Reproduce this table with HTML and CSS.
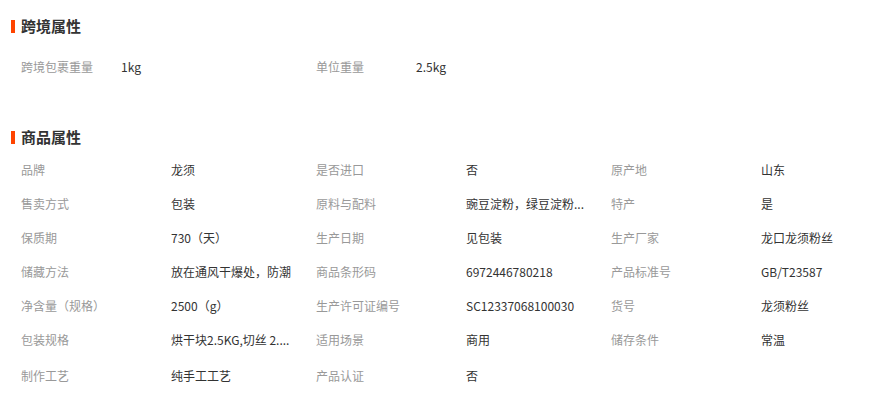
FILE: index.html
```html
<!DOCTYPE html>
<html lang="zh-CN">
<head>
  <meta charset="UTF-8" />
  <title>商品属性</title>
  <link rel="stylesheet" href="styles.css">
</head>
<body>

<div class="attr-panel">
  <!-- 跨境属性 -->
  <div class="section section-cross">
    <h3 class="section-title">跨境属性</h3>
    <div class="attr-grid cross-grid">
      <div class="attr-item">
        <span class="attr-name">跨境包裹重量</span>
        <span class="attr-value">1kg</span>
      </div>
      <div class="attr-item">
        <span class="attr-name">单位重量</span>
        <span class="attr-value">2.5kg</span>
      </div>
    </div>
  </div>

  <!-- 商品属性 -->
  <div class="section section-goods">
    <h3 class="section-title">商品属性</h3>
    <div class="attr-grid goods-grid">
      <div class="attr-item"><span class="attr-name">品牌</span><span class="attr-value">龙须</span></div>
      <div class="attr-item"><span class="attr-name">是否进口</span><span class="attr-value">否</span></div>
      <div class="attr-item"><span class="attr-name">原产地</span><span class="attr-value">山东</span></div>

      <div class="attr-item"><span class="attr-name">售卖方式</span><span class="attr-value">包装</span></div>
      <div class="attr-item"><span class="attr-name">原料与配料</span><span class="attr-value">豌豆淀粉，绿豆淀粉...</span></div>
      <div class="attr-item"><span class="attr-name">特产</span><span class="attr-value">是</span></div>

      <div class="attr-item"><span class="attr-name">保质期</span><span class="attr-value">730（天）</span></div>
      <div class="attr-item"><span class="attr-name">生产日期</span><span class="attr-value">见包装</span></div>
      <div class="attr-item"><span class="attr-name">生产厂家</span><span class="attr-value">龙口龙须粉丝</span></div>

      <div class="attr-item"><span class="attr-name">储藏方法</span><span class="attr-value">放在通风干爆处，防潮</span></div>
      <div class="attr-item"><span class="attr-name">商品条形码</span><span class="attr-value">6972446780218</span></div>
      <div class="attr-item"><span class="attr-name">产品标准号</span><span class="attr-value">GB/T23587</span></div>

      <div class="attr-item"><span class="attr-name">净含量（规格）</span><span class="attr-value">2500（g）</span></div>
      <div class="attr-item"><span class="attr-name">生产许可证编号</span><span class="attr-value">SC12337068100030</span></div>
      <div class="attr-item"><span class="attr-name">货号</span><span class="attr-value">龙须粉丝</span></div>

      <div class="attr-item"><span class="attr-name">包装规格</span><span class="attr-value">烘干块2.5KG,切丝 2....</span></div>
      <div class="attr-item"><span class="attr-name">适用场景</span><span class="attr-value">商用</span></div>
      <div class="attr-item"><span class="attr-name">储存条件</span><span class="attr-value">常温</span></div>

      <div class="attr-item last-row"><span class="attr-name">制作工艺</span><span class="attr-value">纯手工工艺</span></div>
      <div class="attr-item last-row"><span class="attr-name">产品认证</span><span class="attr-value">否</span></div>
    </div>
  </div>
</div>

</body>
</html>
```

FILE: styles.css
```css
* {
  box-sizing: border-box;
}

body {
  margin: 0;
  padding: 0;
  background: #fff;
  font-family: "Noto Sans CJK SC", "Liberation Sans", sans-serif;
  font-size: 12px;
  color: #333;
}

.attr-panel {
  width: 879px;
  padding: 16px 0 0 11px;
}

.section-title {
  margin: 0;
  height: 20px;
  line-height: 20px;
  font-size: 15px;
  font-weight: bold;
  color: #333;
  display: flex;
  align-items: center;
  gap: 6px;
}

.section-title::before {
  content: "";
  width: 4px;
  height: 13px;
  background: #ff4400;
}

.section-cross .attr-grid {
  margin-top: 14px;
}

.section-goods {
  margin-top: 43px;
}

.section-goods .attr-grid {
  margin-top: 6px;
}

.attr-grid {
  display: grid;
  padding-left: 10px;
}

.cross-grid {
  grid-template-columns: 295px 295px;
}

.goods-grid {
  grid-template-columns: 295px 295px 295px;
}

.attr-item {
  display: flex;
  height: 34px;
  line-height: 34px;
  white-space: nowrap;
}

.attr-item.last-row {
  padding-top: 2px;
}

.attr-name {
  color: #999;
  width: 150px;
  flex-shrink: 0;
}

.cross-grid .attr-name {
  width: 100px;
}

.attr-value {
  color: #333;
}
```
